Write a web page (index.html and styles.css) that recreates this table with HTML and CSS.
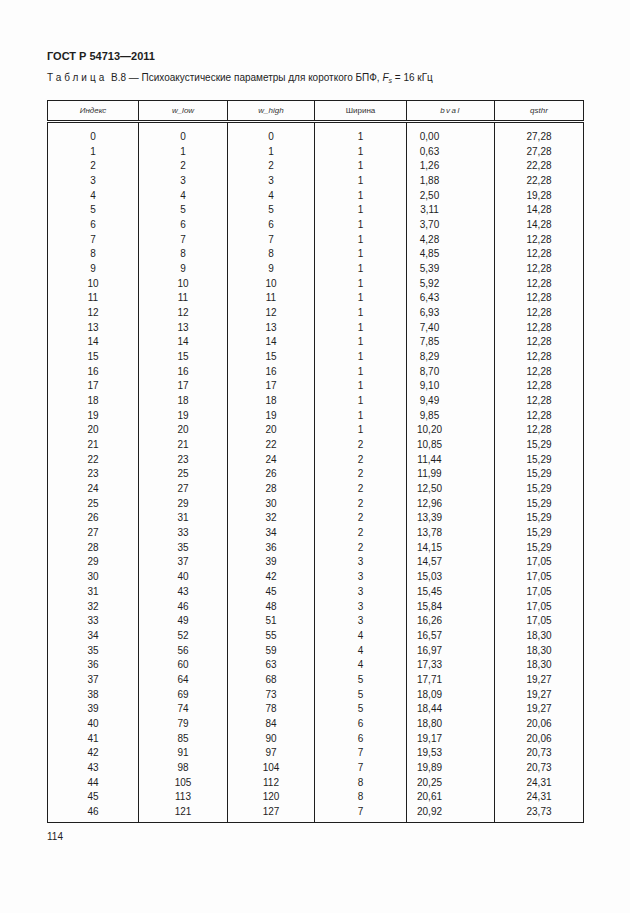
FILE: index.html
```html
<!DOCTYPE html>
<html lang="ru">
<head>
<meta charset="utf-8">
<link rel="stylesheet" href="styles.css">
</head>
<body>
<div class="page">
  <div class="doc-title">ГОСТ Р 54713—2011</div>
  <div class="caption"><span class="spaced">Таблица</span> В.8 — Психоакустические параметры для короткого БПФ, <i>F</i><sub><i>s</i></sub> = 16 кГц</div>
  <table class="data">
    <colgroup>
      <col class="c1"><col class="c2"><col class="c3"><col class="c4"><col class="c5"><col class="c6">
    </colgroup>
    <thead>
      <tr>
        <th class="it">Индекс</th>
        <th class="it">w_low</th>
        <th class="it">w_high</th>
        <th>Ширина</th>
        <th class="it sp">bval</th>
        <th class="it">qsthr</th>
      </tr>
    </thead>
    <tbody id="rows"></tbody>
  </table>
  <div class="pagenum">114</div>
</div>
<script src="script.js"></script>
</body>
</html>
```

FILE: script.js
```js
const data = [
[0,0,0,1,"0,00","27,28"],[1,1,1,1,"0,63","27,28"],[2,2,2,1,"1,26","22,28"],[3,3,3,1,"1,88","22,28"],
[4,4,4,1,"2,50","19,28"],[5,5,5,1,"3,11","14,28"],[6,6,6,1,"3,70","14,28"],[7,7,7,1,"4,28","12,28"],
[8,8,8,1,"4,85","12,28"],[9,9,9,1,"5,39","12,28"],[10,10,10,1,"5,92","12,28"],[11,11,11,1,"6,43","12,28"],
[12,12,12,1,"6,93","12,28"],[13,13,13,1,"7,40","12,28"],[14,14,14,1,"7,85","12,28"],[15,15,15,1,"8,29","12,28"],
[16,16,16,1,"8,70","12,28"],[17,17,17,1,"9,10","12,28"],[18,18,18,1,"9,49","12,28"],[19,19,19,1,"9,85","12,28"],
[20,20,20,1,"10,20","12,28"],[21,21,22,2,"10,85","15,29"],[22,23,24,2,"11,44","15,29"],[23,25,26,2,"11,99","15,29"],
[24,27,28,2,"12,50","15,29"],[25,29,30,2,"12,96","15,29"],[26,31,32,2,"13,39","15,29"],[27,33,34,2,"13,78","15,29"],
[28,35,36,2,"14,15","15,29"],[29,37,39,3,"14,57","17,05"],[30,40,42,3,"15,03","17,05"],[31,43,45,3,"15,45","17,05"],
[32,46,48,3,"15,84","17,05"],[33,49,51,3,"16,26","17,05"],[34,52,55,4,"16,57","18,30"],[35,56,59,4,"16,97","18,30"],
[36,60,63,4,"17,33","18,30"],[37,64,68,5,"17,71","19,27"],[38,69,73,5,"18,09","19,27"],[39,74,78,5,"18,44","19,27"],
[40,79,84,6,"18,80","20,06"],[41,85,90,6,"19,17","20,06"],[42,91,97,7,"19,53","20,73"],[43,98,104,7,"19,89","20,73"],
[44,105,112,8,"20,25","24,31"],[45,113,120,8,"20,61","24,31"],[46,121,127,7,"20,92","23,73"]
];
const tb = document.getElementById("rows");
data.forEach(r => {
  const tr = document.createElement("tr");
  r.forEach(v => { const td = document.createElement("td"); td.textContent = v; tr.appendChild(td); });
  tb.appendChild(tr);
});
```

FILE: styles.css
```css
html, body { margin: 0; padding: 0; background: #fdfdfd; }
body { font-family: "Liberation Sans", Arial, sans-serif; color: #1e1e1e; }
.page { width: 630px; height: 913px; padding: 49px 0 0 47px; box-sizing: border-box; }
.doc-title { font-size: 11px; font-weight: bold; line-height: 14px; }
.caption { font-size: 10px; line-height: 14px; margin-top: 8px; }
.caption .spaced { letter-spacing: 3px; margin-right: 1px; }
.caption sub { font-size: 7px; vertical-align: -2px; line-height: 0; }
.data { border-collapse: collapse; table-layout: fixed; width: 536px; margin-top: 15px; font-size: 10px; }
.c1 { width: 91px; } .c2 { width: 89px; } .c3 { width: 87px; } .c4 { width: 92px; } .c5 { width: 88px; } .c6 { width: 89px; }
.data th { height: 19px; padding: 0; font-size: 8px; font-weight: normal; color: #333; border: 1px solid #1e1e1e; border-bottom: 3px double #1e1e1e; vertical-align: middle; }
.data th.it { font-style: italic; }
.data th.sp { letter-spacing: 1.5px; }
.data td { padding: 0; line-height: 14.67px; text-align: center; border-left: 1px solid #1e1e1e; border-right: 1px solid #1e1e1e; }
.data td:nth-child(5) { padding-right: 42px; }
.data tbody tr:first-child td { padding-top: 7px; }
.data tbody tr:last-child td { padding-bottom: 2px; border-bottom: 1px solid #1e1e1e; }
.pagenum { font-size: 10px; line-height: 14px; margin-top: 7px; }
```
